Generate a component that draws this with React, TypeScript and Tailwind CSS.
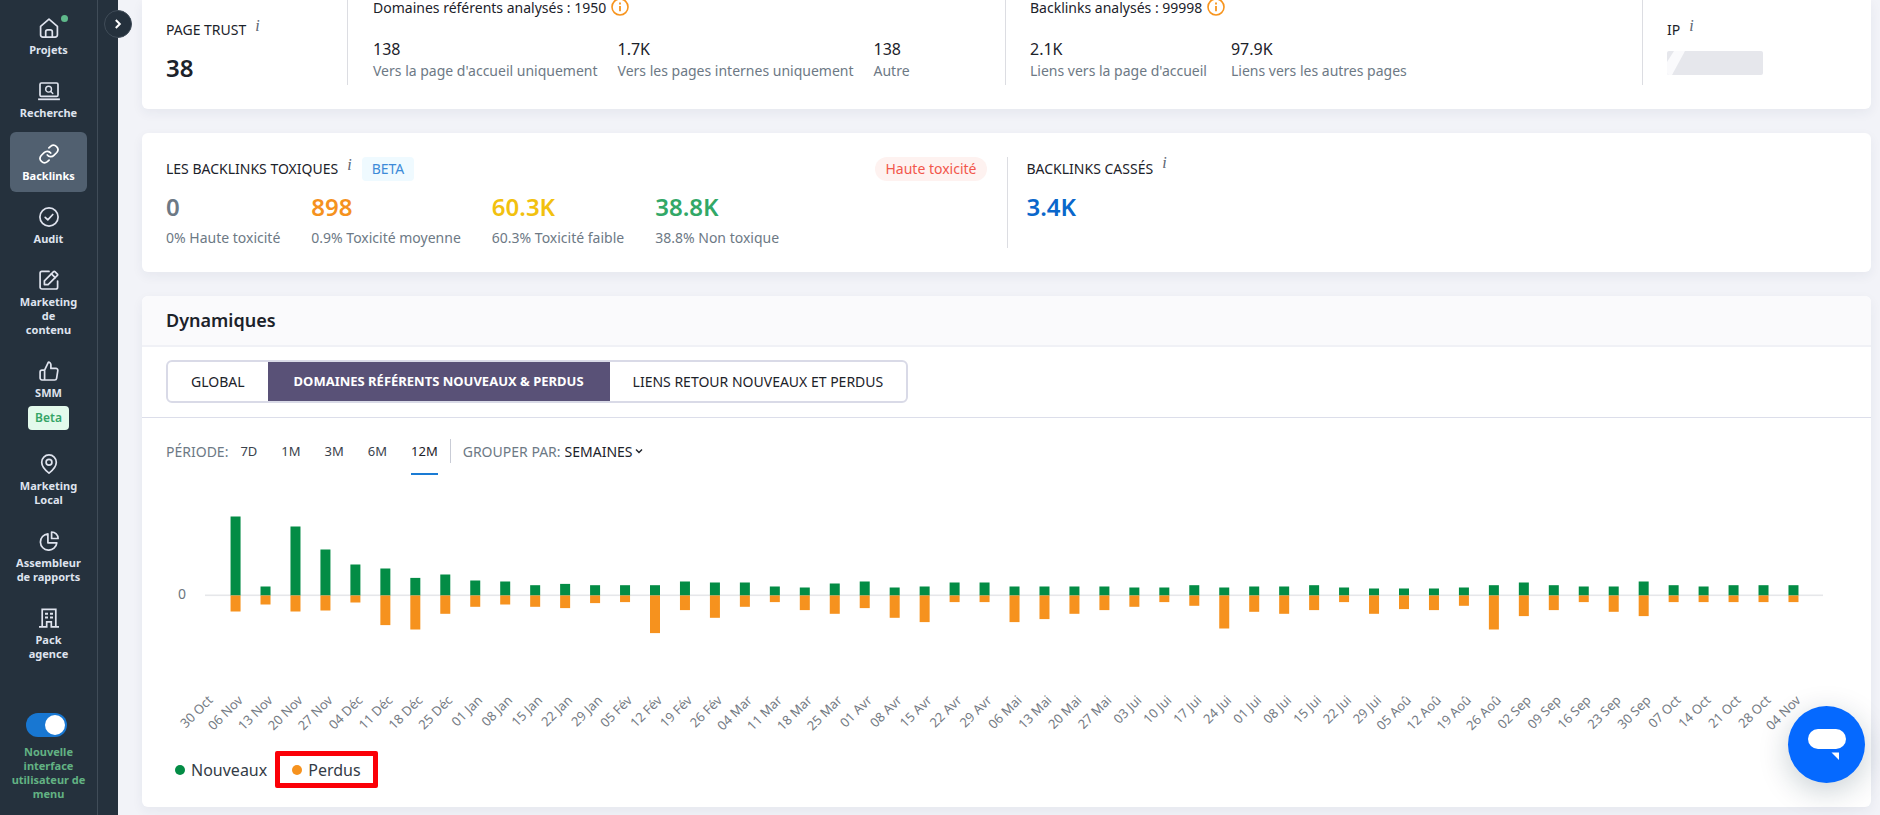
import React, { useState } from "react";

const stroke = {
  fill: "none",
  stroke: "currentColor",
  strokeWidth: 1.7,
  strokeLinecap: "round" as const,
  strokeLinejoin: "round" as const,
};

function Svg({ children }: { children: React.ReactNode }) {
  return (
    <svg viewBox="0 0 20 20" className="block size-5" {...stroke} aria-hidden="true">
      {children}
    </svg>
  );
}

const HomeIcon = () => (
  <Svg>
    <path d="M1.6 8.3 10 1.1l8.4 7.2v8.6a2.2 2.2 0 0 1-2.2 2.2H3.8a2.2 2.2 0 0 1-2.2-2.2Z" />
    <path d="M6.7 19v-5.2a2 2 0 0 1 2-2h2.6a2 2 0 0 1 2 2V19" />
  </Svg>
);
const SearchScreenIcon = () => (
  <svg viewBox="0 0 22 20" className="block h-5 w-[22px]" {...stroke} aria-hidden="true">
    <rect x="2" y="2" width="18" height="13.4" rx="1.4" />
    <path d="M1 18.3h20" strokeWidth="1.8" strokeLinecap="square" />
    <circle cx="10.6" cy="8.2" r="2.9" strokeWidth="1.4" />
    <path d="m12.8 10.4 2 2" strokeWidth="1.4" />
  </svg>
);
const LinkIcon = () => (
  <Svg>
    <path d="M8.3 10.9a4.4 4.4 0 0 0 6.6.5l2.9-2.9a4.4 4.4 0 0 0-6.2-6.2L9.9 3.9" />
    <path d="M11.7 9.1a4.4 4.4 0 0 0-6.6-.5l-2.9 2.9a4.4 4.4 0 0 0 6.2 6.2l1.7-1.6" />
  </Svg>
);
const CheckIcon = () => (
  <Svg>
    <circle cx="10" cy="10" r="9.1" />
    <path d="m6.2 10.4 2.6 2.5 5-5.4" />
  </Svg>
);
const EditIcon = () => (
  <Svg>
    <path d="M10 1.4H2.9A1.8 1.8 0 0 0 1.1 3.2v14a1.8 1.8 0 0 0 1.8 1.8h13.9a1.8 1.8 0 0 0 1.8-1.8V11" />
    <path d="M5.4 14.6v-3.7l9.2-9.3a.9.9 0 0 1 1.3 0l2.5 2.5a.9.9 0 0 1 0 1.3l-9.3 9.2Z" />
    <path d="m12.4 3.8 3.8 3.8" />
  </Svg>
);
const ThumbIcon = () => (
  <Svg>
    <path d="M5.6 9.1 9.4 1.2a2.5 2.5 0 0 1 2.5 2.6v3.6h5a1.9 1.9 0 0 1 1.9 2.2l-1.2 7.8a1.9 1.9 0 0 1-1.9 1.6H3a1.9 1.9 0 0 1-1.9-1.9V11A1.9 1.9 0 0 1 3 9.1h2.6Zm0 0V19" />
  </Svg>
);
const PinIcon = () => (
  <Svg>
    <path d="M17.3 8.2c0 5.2-7.3 10.9-7.3 10.9S2.7 13.4 2.7 8.2a7.3 7.3 0 0 1 14.6 0Z" />
    <circle cx="10" cy="8.2" r="2.9" />
  </Svg>
);
const PieIcon = () => (
  <Svg>
    <path d="M8.9 2.8a8.2 8.2 0 1 0 8.9 9H8.9Z" />
    <path d="M12.6 1v6.5h6.5A6.5 6.5 0 0 0 12.6 1Z" />
  </Svg>
);
const BuildingIcon = () => (
  <Svg>
    <path d="M3.2 18.9V1.3h13.6v17.6M.8 18.9h6.9v-5.1h4.6v5.1h6.9" strokeLinecap="square" strokeLinejoin="miter" />
    <path d="M6 5.7h3M11 5.7h3M6 9.5h3M11 9.5h3" strokeLinecap="butt" strokeWidth="2" />
  </Svg>
);

type NavItem = { icon: () => React.JSX.Element; label: string; active?: boolean; dot?: boolean; beta?: boolean };

const NAV: NavItem[] = [
  { icon: HomeIcon, label: "Projets", dot: true },
  { icon: SearchScreenIcon, label: "Recherche" },
  { icon: LinkIcon, label: "Backlinks", active: true },
  { icon: CheckIcon, label: "Audit" },
  { icon: EditIcon, label: "Marketing\nde\ncontenu" },
  { icon: ThumbIcon, label: "SMM", beta: true },
  { icon: PinIcon, label: "Marketing\nLocal" },
  { icon: PieIcon, label: "Assembleur\nde rapports" },
  { icon: BuildingIcon, label: "Pack\nagence" },
];

function Sidebar() {
  const [on, setOn] = useState(true);
  return (
    <aside className="relative flex w-[118px] shrink-0 bg-[#25313d]">
      <nav className="flex w-[98px] flex-col gap-[3px] border-r border-[#404c58] px-[10px] pt-[6px]">
        {NAV.map(({ icon: Icon, label, active, dot, beta }) => (
          <a
            key={label}
            href="#"
            className={`flex flex-col items-center rounded-[6px] pt-3 pb-[9px] text-center text-[11px] leading-[14px] font-bold ${
              active ? "bg-[#516070] text-white" : "text-[#dfe3ee]"
            }`}
          >
            <span className="relative">
              <Icon />
              {dot && <span className="absolute -top-[3px] -right-[9px] size-[7px] rounded-full bg-[#5fb98b]" />}
            </span>
            <span className="mt-[5px] whitespace-pre-line">{label}</span>
            {beta && (
              <span className="mt-[6px] rounded-[4px] bg-[#e3faec] px-[7px] text-[12px] leading-6 font-semibold text-[#35a567]">
                Beta
              </span>
            )}
          </a>
        ))}
        <label className="mt-[40px] flex flex-col items-center gap-2 text-center text-[11px] leading-[14px] font-bold text-[#62b283]">
          <span className="relative mr-[5px] block h-6 w-[41px]">
            <input
              type="checkbox"
              checked={on}
              onChange={() => setOn(!on)}
              className="peer block h-6 w-[41px] appearance-none rounded-full bg-[#6b7885] checked:bg-[#1877d2]"
            />
            <span className="pointer-events-none absolute top-[2px] left-[2px] size-5 rounded-full bg-white peer-checked:left-[19px]" />
          </span>
          Nouvelle interface utilisateur de menu
        </label>
      </nav>
      <button
        aria-label="Ouvrir le menu"
        className="absolute top-[10px] -right-[14px] flex size-7 items-center justify-center rounded-full border border-[#404c58] bg-[#25313d] text-white"
      >
        <svg viewBox="0 0 10 10" className="size-[10px]" fill="none" stroke="currentColor" strokeWidth="2" aria-hidden="true">
          <path d="m2.8 1 4 4-4 4" />
        </svg>
      </button>
    </aside>
  );
}

const Hint = () => (
  <sup className="top-0 ml-[9px] self-start font-['Liberation_Serif',serif] text-[16px] leading-3 text-[#5c6672] italic">i</sup>
);

function InfoIcon() {
  return (
    <svg viewBox="0 0 18 18" className="size-[18px]" fill="none" stroke="#f7941d" strokeWidth="1.6" aria-hidden="true">
      <circle cx="9" cy="9" r="8" />
      <path d="M9 8v5.2M9 4.6v1.8" strokeWidth="1.8" />
    </svg>
  );
}

const card = "rounded-[6px] bg-white shadow-[0_4px_12px_rgba(40,50,90,0.06)]";

function Stats({ items, gap }: { items: [string, string][]; gap: string }) {
  return (
    <dl className={`mt-[23px] flex ${gap}`}>
      {items.map(([value, label]) => (
        <div key={label} className="flex flex-col">
          <dd className="text-[16px] leading-6 text-[#1c222a]">{value}</dd>
          <dt className="text-[14px] leading-5 whitespace-nowrap text-[#6d7985]">{label}</dt>
        </div>
      ))}
    </dl>
  );
}

function Overview() {
  return (
    <section className={`${card} grid grid-cols-[181fr_658fr_637fr_205fr] rounded-t-none px-6 pb-6 text-[14px]`}>
      <div className="h-[85px] pt-[20px]">
        <h2 className="flex leading-5 text-[#1c222a]">
          PAGE TRUST
          <Hint />
        </h2>
        <p className="mt-[13px] text-[24px] leading-[30px] font-semibold text-[#1c222a]">38</p>
      </div>
      <div className="border-l border-[#dcdde2] pl-[25px]">
        <p className="flex h-[14px] items-center gap-[5px] text-[#1c222a]">
          Domaines référents analysés : 1950 <InfoIcon />
        </p>
        <Stats
          gap="gap-5"
          items={[
            ["138", "Vers la page d'accueil uniquement"],
            ["1.7K", "Vers les pages internes uniquement"],
            ["138", "Autre"],
          ]}
        />
      </div>
      <div className="border-l border-[#dcdde2] pl-6">
        <p className="flex h-[14px] items-center gap-[5px] text-[#1c222a]">
          Backlinks analysés : 99998 <InfoIcon />
        </p>
        <Stats
          gap="gap-6"
          items={[
            ["2.1K", "Liens vers la page d'accueil"],
            ["97.9K", "Liens vers les autres pages"],
          ]}
        />
      </div>
      <div className="border-l border-[#dcdde2] pt-[20px] pl-6">
        <h2 className="flex leading-5 text-[#1c222a]">
          IP
          <Hint />
        </h2>
        <svg viewBox="0 0 96 24" className="mt-[11px] h-6 w-24 rounded-[2px] bg-[#e6e7ec]" aria-hidden="true">
          <path d="M0 11 7 0h11L5 24H0Z" fill="#fafafc" />
        </svg>
      </div>
    </section>
  );
}

const TOXIC = [
  { value: "0", label: "0% Haute toxicité", color: "text-[#6d7985]" },
  { value: "898", label: "0.9% Toxicité moyenne", color: "text-[#f5921e]" },
  { value: "60.3K", label: "60.3% Toxicité faible", color: "text-[#f2c10f]" },
  { value: "38.8K", label: "38.8% Non toxique", color: "text-[#32a867]" },
];

function Toxicity() {
  return (
    <section className={`${card} grid grid-cols-2 p-6 text-[14px]`}>
      <div className="pr-5">
        <div className="flex h-6 items-center">
          <h2 className="flex leading-5 text-[#1c222a]">
            LES BACKLINKS TOXIQUES
            <Hint />
          </h2>
          <span className="ml-[10px] rounded-[4px] bg-[#effaff] px-[10px] leading-6 text-[#3d8bd8]">BETA</span>
          <span className="ml-auto rounded-full bg-[#fef2f0] px-[10px] leading-6 text-[#f2574b]">Haute toxicité</span>
        </div>
        <dl className="mt-[11px] flex gap-[31px]">
          {TOXIC.map(({ value, label, color }) => (
            <div key={label}>
              <dd className={`text-[24px] leading-[30px] font-semibold ${color}`}>{value}</dd>
              <dt className="mt-[6px] leading-5 whitespace-nowrap text-[#6d7985]">{label}</dt>
            </div>
          ))}
        </dl>
      </div>
      <div className="border-l border-[#dcdde2] pl-[19px]">
        <h2 className="flex h-6 items-center leading-5 text-[#1c222a]">
          BACKLINKS CASSÉS
          <Hint />
        </h2>
        <p className="mt-[11px] text-[24px] leading-[30px] font-semibold text-[#0a67cb]">3.4K</p>
      </div>
    </section>
  );
}

const WEEKS: [string, number, number][] = [
  ["30 Oct", 0, 0], ["06 Nov", 79, 16], ["13 Nov", 9, 9], ["20 Nov", 69, 16], ["27 Nov", 46, 15],
  ["04 Déc", 31, 7], ["11 Déc", 27, 29.6], ["18 Déc", 17.6, 34], ["25 Déc", 21, 18.3], ["01 Jan", 15, 11.3],
  ["08 Jan", 14, 9], ["15 Jan", 10.3, 11.3], ["22 Jan", 11.6, 12.6], ["29 Jan", 10.3, 7.6], ["05 Fév", 10.3, 6.6],
  ["12 Fév", 10.3, 37.6], ["19 Fév", 14, 14.6], ["26 Fév", 13, 22.3], ["04 Mar", 13, 11.3], ["11 Mar", 9, 6.6],
  ["18 Mar", 8, 14.6], ["25 Mar", 12, 18.3], ["01 Avr", 14, 12.6], ["08 Avr", 8, 22.3], ["15 Avr", 9, 26.6],
  ["22 Avr", 13, 6.6], ["29 Avr", 13, 6.6], ["06 Mai", 9, 26.6], ["13 Mai", 9, 23.6], ["20 Mai", 9, 18.3],
  ["27 Mai", 9, 14.6], ["03 Jui", 8, 11.3], ["10 Jui", 8, 6.6], ["17 Jui", 10.3, 10.3], ["24 Jui", 8, 33],
  ["01 Jui", 9, 16.3], ["08 Jui", 9, 18.3], ["15 Jui", 10.3, 14.6], ["22 Jui", 8, 6.6], ["29 Jui", 7, 18.3],
  ["05 Aoû", 7, 13.6], ["12 Aoû", 7, 14.6], ["19 Aoû", 8, 10.3], ["26 Aoû", 10.3, 34], ["02 Sep", 13, 20.6],
  ["09 Sep", 10.3, 14.6], ["16 Sep", 9, 6.6], ["23 Sep", 9, 16.3], ["30 Sep", 14, 20.6], ["07 Oct", 10.3, 6.6],
  ["14 Oct", 9, 6.6], ["21 Oct", 10.3, 6.6], ["28 Oct", 10.3, 6.6], ["04 Nov", 10.3, 6.6],
];

function Chart() {
  const base = 107.5;
  const step = 29.96;
  const first = 39.6;
  return (
    <svg viewBox="0 0 1681 256" className="block h-auto w-full" role="img" aria-label="Domaines référents nouveaux et perdus">
      <rect x="39" y={base - 1} width="1618" height="1.6" fill="#e6e7ea" />
      <text x="12" y="111" fontSize="14" fill="#6d7680">0</text>
      {WEEKS.map(([label, gained, lost], i) => {
        const x = first + i * step;
        return (
          <g key={label}>
            <rect x={x - 5} y={base - gained} width="10" height={gained} fill="#038c45" />
            <rect x={x - 5} y={base} width="10" height={lost} fill="#f6921e" />
            <text x={x + 8} y="213" fontSize="13" fill="#757b84" textAnchor="end" transform={`rotate(-45 ${x + 8} 213)`}>
              {label}
            </text>
          </g>
        );
      })}
    </svg>
  );
}

const TABS = ["GLOBAL", "DOMAINES RÉFÉRENTS NOUVEAUX & PERDUS", "LIENS RETOUR NOUVEAUX ET PERDUS"];
const PERIODS = ["7D", "1M", "3M", "6M", "12M"];

function Dynamics() {
  const [tab, setTab] = useState(1);
  const [period, setPeriod] = useState("12M");
  return (
    <section className={card}>
      <header className="rounded-t-[6px] border-b-2 border-[#f0f1f6] bg-[#fafafc] px-6 py-[10px]">
        <h2 className="text-[18px] leading-[29px] font-semibold text-[#1c222a]">Dynamiques</h2>
      </header>
      <div className="flex border-b border-[#dcdeea] px-6 pt-[13px] pb-[14px]">
        <div role="tablist" className="flex overflow-hidden rounded-[6px] border-2 border-[#d9dae7]">
          {TABS.map((name, i) => (
            <button
              key={name}
              role="tab"
              aria-selected={tab === i}
              onClick={() => setTab(i)}
              className={`h-[39px] whitespace-nowrap ${
                tab === i ? "bg-[#595177] px-[26px] text-[13px] font-bold text-white" : "px-[23px] text-[14px] text-[#1c222a]"
              }`}
            >
              {name}
            </button>
          ))}
        </div>
      </div>
      <div className="px-6">
        <div className="mb-1 flex h-[66px] items-center text-[14px] text-[#3a424c]">
          <span className="mr-3 text-[#6d7985]">PÉRIODE:</span>
          <div className="flex gap-6">
            {PERIODS.map((name) => (
              <button
                key={name}
                onClick={() => setPeriod(name)}
                className={`border-y-2 border-t-transparent py-3 text-[13px] leading-5 ${
                  period === name ? "border-b-[#1a7bd4] text-[#1c222a]" : "border-b-transparent"
                }`}
              >
                {name}
              </button>
            ))}
          </div>
          <span className="mx-3 h-6 w-px bg-[#c9ccd6]" />
          <label htmlFor="group" className="mr-1 text-[#6d7985]">
            GROUPER PAR:
          </label>
          <select id="group" className="field-sizing-content appearance-none bg-transparent text-[#1c222a]">
            <option>SEMAINES</option>
            <option>MOIS</option>
          </select>
          <svg viewBox="0 0 8 8" className="ml-[2px] size-2" fill="none" stroke="#1c222a" strokeWidth="1.4" aria-hidden="true">
            <path d="m1 2.5 3 3 3-3" />
          </svg>
        </div>
        <Chart />
        <div className="flex items-center pt-[7px] pb-[19px] pl-[9px] text-[16px] text-[#343c46]">
          <button className="flex items-center gap-[6px]">
            <span className="size-[10px] rounded-full bg-[#038c45]" />
            Nouveaux
          </button>
          <button className="ml-2 flex h-[37px] w-[103px] items-center gap-[6px] rounded-[2px] border-[5px] border-[#fb0007] pl-3">
            <span className="size-[10px] rounded-full bg-[#f6921e]" />
            Perdus
          </button>
        </div>
      </div>
    </section>
  );
}

export default function App() {
  return (
    <div className="flex min-h-screen bg-[#f2f3f8] font-['Noto_Sans',sans-serif]">
      <Sidebar />
      <main className="flex min-w-0 flex-1 flex-col gap-6 pr-[9px] pb-2 pl-6">
        <Overview />
        <Toxicity />
        <Dynamics />
      </main>
      <button
        aria-label="Ouvrir la discussion"
        className="fixed right-[15px] bottom-8 flex size-[77px] items-center justify-center rounded-full bg-[#0569ff] shadow-[0_8px_30px_rgba(10,40,60,0.22)]"
      >
        <svg viewBox="0 0 38 32" className="h-8 w-[38px]" fill="#fff" aria-hidden="true">
          <rect width="38" height="20" rx="10" />
          <path d="M23.5 23.5H31V31Z" />
        </svg>
      </button>
    </div>
  );
}
